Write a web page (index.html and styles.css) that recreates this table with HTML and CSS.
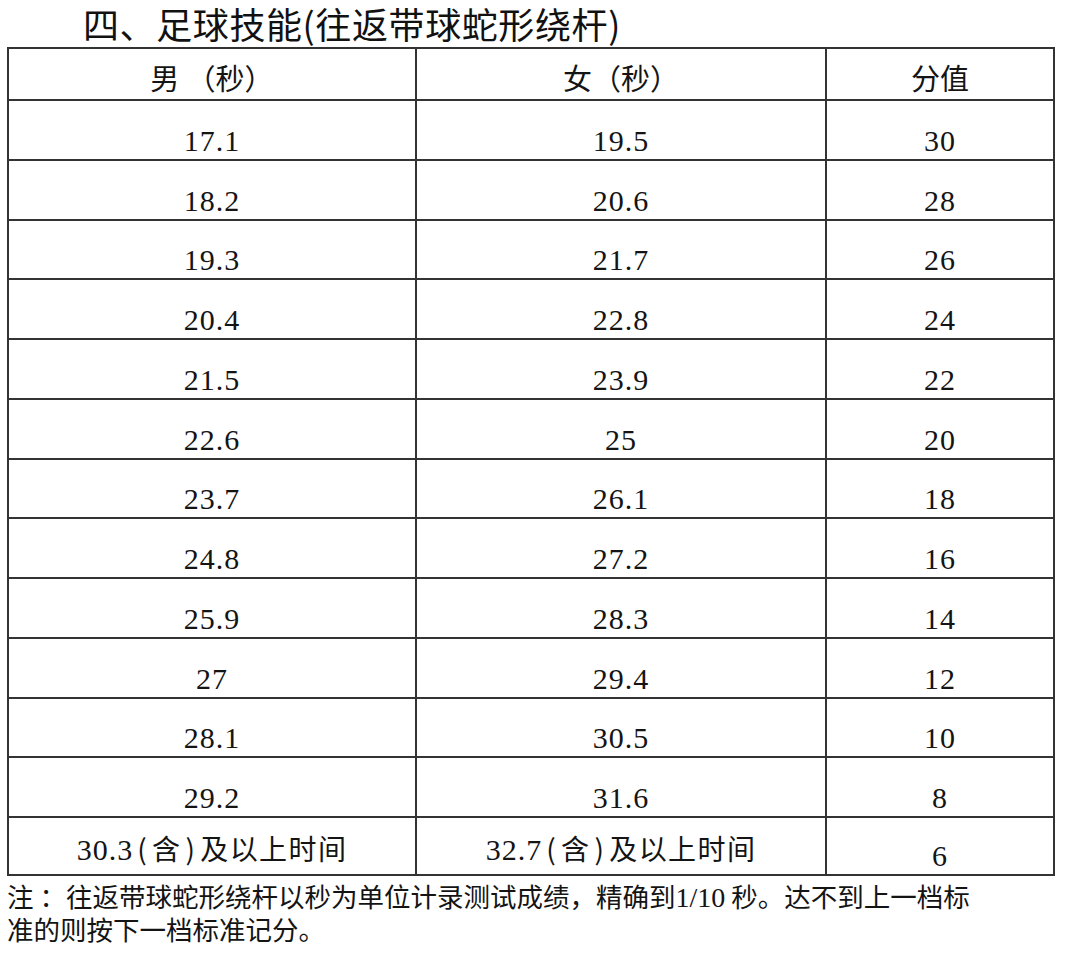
FILE: index.html
```html
<!DOCTYPE html>
<html lang="zh-CN">
<head>
<meta charset="utf-8">
<title>四、足球技能</title>
<link rel="stylesheet" href="styles.css">
</head>
<body>
<h1 class="title">四、足球技能(往返带球蛇形绕杆)</h1>
<table class="score-table">
  <colgroup>
    <col class="col-male">
    <col class="col-female">
    <col class="col-score">
  </colgroup>
  <thead>
    <tr class="head-row">
      <th>男 （秒）</th>
      <th>女（秒）</th>
      <th>分值</th>
    </tr>
  </thead>
  <tbody>
    <tr><td>17.1</td><td>19.5</td><td>30</td></tr>
    <tr><td>18.2</td><td>20.6</td><td>28</td></tr>
    <tr><td>19.3</td><td>21.7</td><td>26</td></tr>
    <tr><td>20.4</td><td>22.8</td><td>24</td></tr>
    <tr><td>21.5</td><td>23.9</td><td>22</td></tr>
    <tr><td>22.6</td><td>25</td><td>20</td></tr>
    <tr><td>23.7</td><td>26.1</td><td>18</td></tr>
    <tr><td>24.8</td><td>27.2</td><td>16</td></tr>
    <tr><td>25.9</td><td>28.3</td><td>14</td></tr>
    <tr><td>27</td><td>29.4</td><td>12</td></tr>
    <tr><td>28.1</td><td>30.5</td><td>10</td></tr>
    <tr><td>29.2</td><td>31.6</td><td>8</td></tr>
    <tr class="last-row">
      <td class="raised">30.3<span class="cjk"><span class="pn">(</span>含<span class="pn">)</span>及以上时间</span></td>
      <td class="raised">32.7<span class="cjk"><span class="pn">(</span>含<span class="pn">)</span>及以上时间</span></td>
      <td>6</td>
    </tr>
  </tbody>
</table>
<p class="note">注 ：往返带球蛇形绕杆以秒为单位计录测试成绩，精确到<span class="num">1/10</span> 秒。达不到上一档标<br>准的则按下一档标准记分。</p>
</body>
</html>
```

FILE: styles.css
```css
html, body {
  margin: 0;
  padding: 0;
  background: #ffffff;
}

body {
  width: 1080px;
  height: 954px;
  overflow: hidden;
  font-family: "Noto Sans CJK SC", "Noto Sans", sans-serif;
  color: #111111;
}

.title {
  margin: 0;
  padding-left: 83px;
  height: 47px;
  font-size: 36px;
  line-height: 47px;
  font-weight: 400;
  letter-spacing: 0.6px;
  color: #111111;
  white-space: nowrap;
}

.score-table {
  margin-left: 7px;
  width: 1046px;
  border-collapse: collapse;
  table-layout: fixed;
  font-family: "Liberation Serif", "Noto Sans CJK SC", serif;
  color: #141414;
}

.col-male { width: 408px; }
.col-female { width: 410px; }
.col-score { width: 228px; }

.score-table th,
.score-table td {
  border: 2px solid #333333;
  padding: 0 0 3px 0;
  text-align: center;
  vertical-align: bottom;
  line-height: 30px;
  white-space: nowrap;
}

.score-table th {
  font-weight: 400;
  font-size: 29px;
  height: 46px;
  padding-bottom: 4px;
}

.score-table td {
  font-size: 30px;
  letter-spacing: 1px;
  height: 54.75px;
}

.score-table .last-row td {
  height: 53px;
}

.score-table .last-row td.raised {
  height: 47px;
  padding-bottom: 9px;
}

.cjk {
  font-family: "Noto Sans CJK SC", sans-serif;
  font-size: 28px;
  letter-spacing: 1.4px;
}

.pn {
  margin: 0 4px;
}

.note {
  margin: 4px 0 0 7px;
  font-size: 26.5px;
  line-height: 31px;
  color: #141414;
  white-space: nowrap;
}

.num {
  font-family: "Liberation Serif", serif;
  font-size: 28px;
}
```
